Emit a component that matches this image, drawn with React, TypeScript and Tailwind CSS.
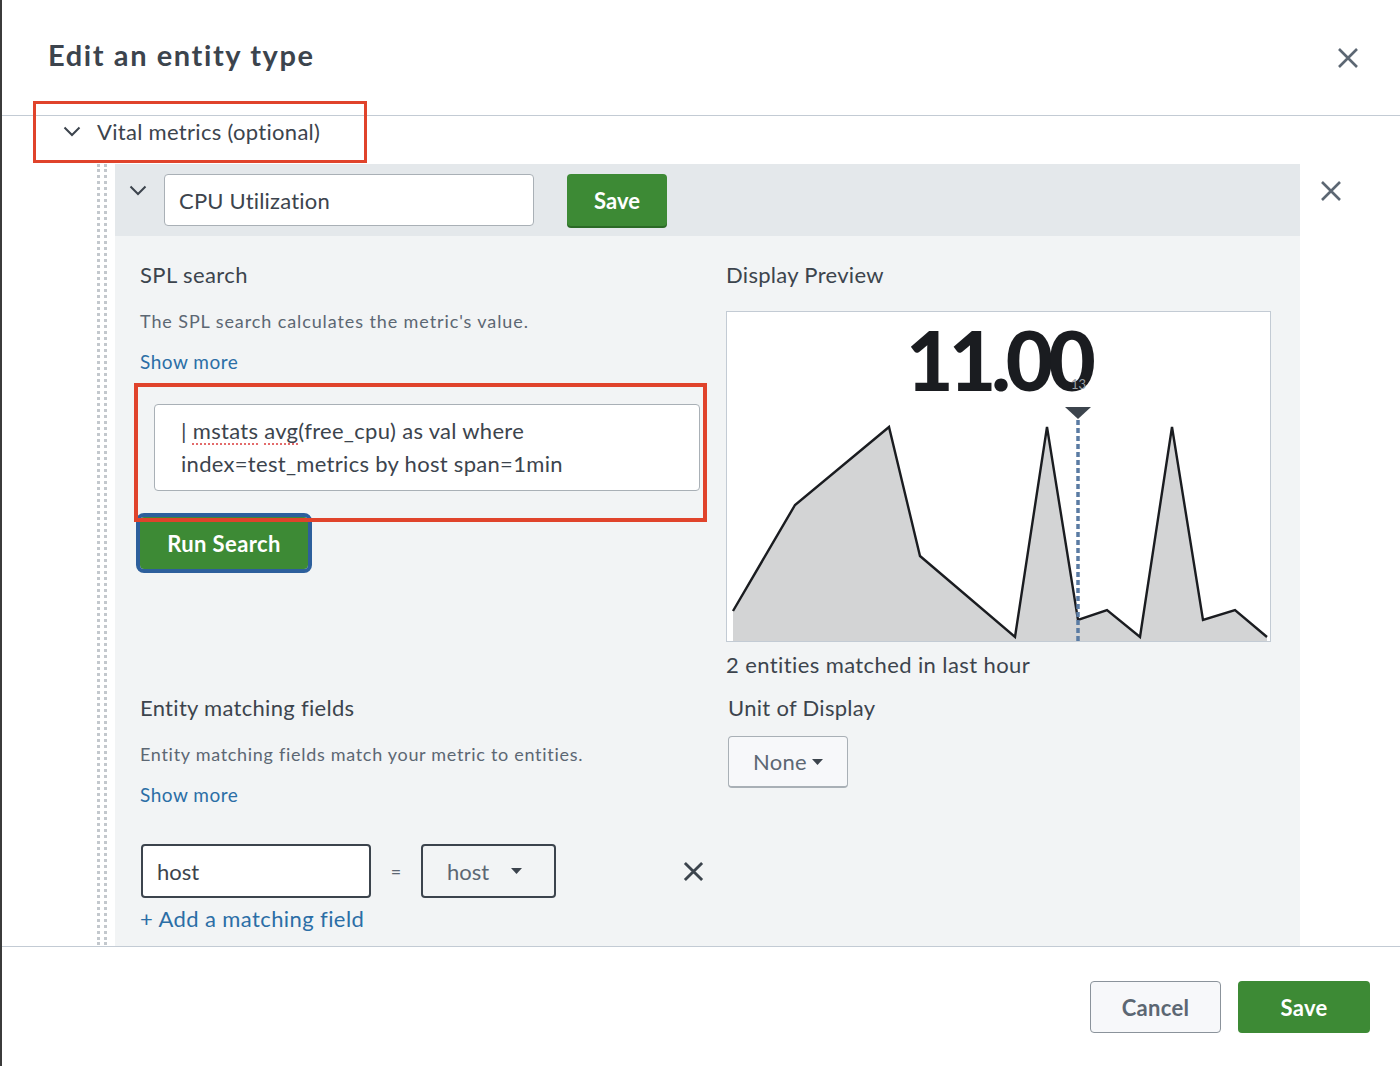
import { X } from 'lucide-react';

const pts: [number, number][] = [
  [733, 611], [795, 505], [889, 427], [920, 556], [1015, 637], [1047, 427],
  [1078, 620], [1107, 610], [1140, 637], [1172, 427], [1203, 620], [1235, 610], [1267, 637],
];

function Chevron({ className = '' }: { className?: string }) {
  return (
    <svg width="18" height="11" viewBox="0 0 18 11" className={className}>
      <path d="M1.5 1.5 9 9l7.5-7.5" fill="none" stroke="#3c444d" strokeWidth="2" />
    </svg>
  );
}

function Close({ size = 22, stroke = 2.6, color = '#5c6773' }: { size?: number; stroke?: number; color?: string }) {
  return (
    <svg width={size} height={size} viewBox="0 0 22 22">
      <path d="M2 2l18 18M20 2 2 20" stroke={color} strokeWidth={stroke} />
    </svg>
  );
}

function Caret() {
  return (
    <svg width="11" height="6" viewBox="0 0 11 6">
      <path d="M0 0h11L5.5 6z" fill="#3c444d" />
    </svg>
  );
}

function Chart() {
  // coordinates taken relative to the preview box (727, 312)
  const rel = pts.map(([x, y]) => [x - 727, y - 312]);
  const line = rel.map(([x, y]) => `${x},${y}`).join(' ');
  const area = `6,330 ${line} 540,330`;
  return (
    <div className="relative mt-[22px] h-[331px] w-[545px] border border-[#c3cbd4] bg-white">
      <svg width="543" height="329" viewBox="0 0 543 329" className="block">
        <polygon points={area} fill="#d3d4d5" />
        <polyline points={line} fill="none" stroke="#1a1c20" strokeWidth="2.4" strokeLinejoin="miter" />
        <line x1="351" y1="108" x2="351" y2="330" stroke="#5a7ba3" strokeWidth="3.5" strokeDasharray="5 3" />
        <path d="M338 95h26l-13 12z" fill="#3c444d" />
      </svg>
      <div className="absolute left-0 right-0 top-[6px] flex justify-center">
        <span className="text-[82px] font-black leading-none tracking-[-5px] text-[#1a1c20]">11.00</span>
      </div>
      <span className="absolute left-[344px] top-[66px] text-[13px] leading-none text-[#9aa0a6]">13</span>
    </div>
  );
}

export default function App() {
  return (
    <div
      className="relative flex h-[1066px] w-[1400px] flex-col border-l-2 border-[#3b3b3b] bg-white text-[#3c444d]"
      style={{ fontFamily: 'Lato, "Open Sans", sans-serif' }}
    >
      {/* header */}
      <div className="flex h-[117px] items-center justify-between border-b border-[#c3cbd4] pl-[46px] pr-[41px]">
        <h1 className="pb-[6px] text-[29px] font-bold leading-[36px] tracking-[1.6px] text-[#3c444d]">Edit an entity type</h1>
        <Close size={22} stroke={2.6} />
      </div>

      {/* body */}
      <div className="flex flex-1 flex-col">
        <div className="flex h-[31px] items-center pl-[61px]">
          <Chevron />
          <span className="ml-[16px] text-[22px] leading-[28px] tracking-[0.3px]">Vital metrics (optional)</span>
        </div>

        <div className="mt-[17px] flex items-start pl-[95px]">
          <div className="h-[781px] w-[10px] border-x-[3px] border-dotted border-[#c3c8cd]" />
          <div className="ml-[8px] w-[1185px] bg-[#f2f4f5]">
            <div className="flex h-[72px] items-start bg-[#e4e8eb] pl-[14px] pt-[10px]">
              <Chevron className="mt-[11px]" />
              <div className="ml-[17px] flex h-[52px] w-[370px] items-center rounded-[4px] border border-[#a9b0b6] bg-white pl-[14px] text-[22px] tracking-[0.2px]">
                CPU Utilization
              </div>
              <button className="ml-[33px] h-[52px] w-[100px] rounded-[4px] bg-[#3d8a35] text-[22px] font-bold text-white shadow-[0_2px_0_#2b6a26]">
                Save
              </button>
            </div>

            <div className="grid grid-cols-[560px_546px] gap-x-[26px] gap-y-[15px] px-[25px]">
              <div className="pt-[25px]">
                <div className="text-[22px] leading-[28px] tracking-[0.4px]">SPL search</div>
                <div className="mt-[20px] text-[18px] leading-[24px] tracking-[0.9px] text-[#5c6773]">
                  The SPL search calculates the metric's value.
                </div>
                <div className="mt-[17px] text-[19px] leading-[24px] tracking-[0.5px] text-[#2b6ea6]">Show more</div>
                <div className="ml-[14px] mt-[30px] h-[87px] w-[546px] rounded-[4px] border border-[#a9b0b6] bg-white pl-[26px] pt-[9px] text-[22px] leading-[33px] tracking-[0.3px]">
                  |{' '}
                  <span className="underline decoration-[#e36b6b] decoration-dotted decoration-2 underline-offset-4">mstats</span>{' '}
                  <span className="underline decoration-[#e36b6b] decoration-dotted decoration-2 underline-offset-4">avg</span>
                  (free_cpu) as val where
                  <br />
                  index=test_metrics by host span=1min
                </div>
                <button className="mt-[26px] h-[52px] w-[168px] rounded-[4px] bg-[#3d8a35] text-[22px] font-bold tracking-[0.4px] text-white outline-[4px] outline-[#2d5f9c] outline-solid">
                  Run Search
                </button>
              </div>

              <div className="pt-[25px]">
                <div className="text-[22px] leading-[28px] tracking-[0.3px]">Display Preview</div>
                <Chart />
                <div className="mt-[9px] text-[22px] leading-[28px] tracking-[0.4px]">2 entities matched in last hour</div>
              </div>

              <div>
                <div className="text-[22px] leading-[28px] tracking-[0.3px]">Entity matching fields</div>
                <div className="mt-[20px] text-[18px] leading-[24px] tracking-[0.7px] text-[#5c6773]">
                  Entity matching fields match your metric to entities.
                </div>
                <div className="mt-[17px] text-[19px] leading-[24px] tracking-[0.5px] text-[#2b6ea6]">Show more</div>
                <div className="mt-[37px] flex items-center">
                  <div className="ml-[1px] flex h-[54px] w-[230px] shrink-0 items-center rounded-[4px] border-2 border-[#3c444d] bg-white pl-[14px] text-[22px]">
                    host
                  </div>
                  <div className="w-[50px] shrink-0 text-center text-[18px] text-[#5c6773]">=</div>
                  <div className="flex h-[54px] w-[135px] shrink-0 items-center rounded-[4px] border-2 border-[#3c444d] bg-[#f2f4f5] pl-[24px] text-[22px] text-[#5c6773]">
                    host
                    <span className="ml-[22px] flex">
                      <Caret />
                    </span>
                  </div>
                  <div className="ml-[127px] flex shrink-0">
                    <Close size={21} stroke={3} color="#3c444d" />
                  </div>
                </div>
                <div className="mt-[7px] pb-[13px] text-[22px] leading-[28px] tracking-[0.4px] text-[#2b6ea6]">+ Add a matching field</div>
              </div>

              <div className="pl-[2px]">
                <div className="text-[22px] leading-[28px] tracking-[0.3px]">Unit of Display</div>
                <div className="mt-[14px] flex h-[52px] w-[120px] items-center rounded-[4px] border border-b-2 border-[#a9b0b6] bg-[#f7f8fa] pl-[24px] text-[22px] tracking-[0.3px] text-[#5c6773]">
                  None
                  <span className="ml-[5px] flex">
                    <Caret />
                  </span>
                </div>
              </div>
            </div>
          </div>
          <div className="ml-[20px] mt-[16px] flex">
            <X size={0} className="hidden" />
            <Close size={22} stroke={2.6} />
          </div>
        </div>
      </div>

      {/* footer */}
      <div className="flex h-[120px] items-start justify-end gap-[17px] border-t border-[#c3cbd4] pr-[30px] pt-[34px]">
        <button className="h-[52px] w-[131px] rounded-[4px] border-[1.5px] border-[#8b939b] bg-[#f7f8fa] text-[22px] font-bold tracking-[0.3px] text-[#5c6773]">
          Cancel
        </button>
        <button className="h-[52px] w-[132px] rounded-[4px] bg-[#3d8a35] text-[22px] font-bold tracking-[0.3px] text-white">Save</button>
      </div>

      {/* annotation boxes */}
      <div className="pointer-events-none absolute left-[31px] top-[101px] h-[62px] w-[334px] border-[3px] border-[#e0432b]" />
      <div className="pointer-events-none absolute left-[132px] top-[383px] h-[139px] w-[573px] border-4 border-[#e0432b]" />
    </div>
  );
}
